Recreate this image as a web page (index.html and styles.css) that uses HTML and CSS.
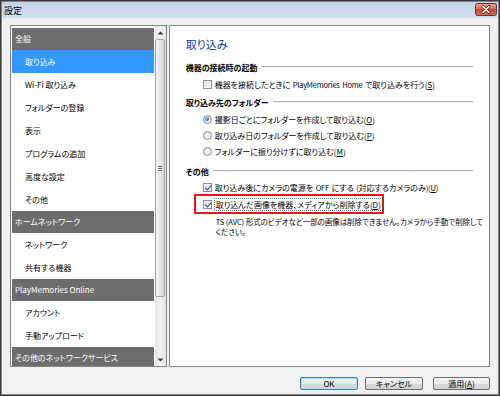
FILE: index.html
```html
<!DOCTYPE html>
<html lang="ja">
<head>
<meta charset="utf-8">
<title>設定</title>
<link rel="stylesheet" href="styles.css">
</head>
<body>
<div class="window">
  <div class="titlebar">
    <span class="title">設定</span>
    <span class="close">
      <svg width="22" height="13" viewBox="0 0 22 13">
        <defs>
          <linearGradient id="cg" x1="0" y1="0" x2="0" y2="1">
            <stop offset="0" stop-color="#e8a595"/>
            <stop offset="0.45" stop-color="#d2705c"/>
            <stop offset="0.5" stop-color="#c24a36"/>
            <stop offset="1" stop-color="#d0765a"/>
          </linearGradient>
        </defs>
        <rect x="0.5" y="0.5" width="21" height="12" rx="2" fill="url(#cg)" stroke="#7a3328"/>
        <path d="M8 3.5 L14 9.5 M14 3.5 L8 9.5" stroke="#5a2018" stroke-width="3" stroke-linecap="round"/>
        <path d="M8 3.5 L14 9.5 M14 3.5 L8 9.5" stroke="#ffffff" stroke-width="1.6" stroke-linecap="round"/>
      </svg>
    </span>
  </div>
  <div class="body">
    <div class="panes">
      <div class="nav">
        <div class="nav-list">
          <div class="hdr">全般</div>
          <div class="item sel">取り込み</div>
          <div class="item">Wi-Fi 取り込み</div>
          <div class="item">フォルダーの登録</div>
          <div class="item">表示</div>
          <div class="item">プログラムの追加</div>
          <div class="item">高度な設定</div>
          <div class="item">その他</div>
          <div class="hdr">ホームネットワーク</div>
          <div class="item">ネットワーク</div>
          <div class="item">共有する機器</div>
          <div class="hdr">PlayMemories Online</div>
          <div class="item">アカウント</div>
          <div class="item">手動アップロード</div>
          <div class="hdr">その他のネットワークサービス</div>
        </div>
        <div class="scrollbar">
          <div class="arrow">
            <svg width="7" height="4" viewBox="0 0 7 4"><path d="M0.5 3.5 L3.5 0.5 L6.5 3.5 Z" fill="#3c3c3c"/></svg>
          </div>
          <div class="thumb"><span class="grip"></span></div>
          <div class="track-rest"></div>
          <div class="arrow">
            <svg width="7" height="4" viewBox="0 0 7 4"><path d="M0.5 0.5 L3.5 3.5 L6.5 0.5 Z" fill="#3c3c3c"/></svg>
          </div>
        </div>
      </div>
      <div class="content">
        <div class="page-title">取り込み</div>

        <div class="group first">
          <span class="group-label">機器の接続時の起動</span><span class="rule"></span>
        </div>
        <div class="row tight">
          <span class="cb"></span><span class="label">機器を接続したときに<span class="lat"> PlayMemories Home </span>で取り込みを行う(<u>S</u>)</span>
        </div>

        <div class="group second">
          <span class="group-label">取り込み先のフォルダー</span><span class="rule"></span>
        </div>
        <div class="row tight">
          <span class="radio on"></span><span class="label">撮影日ごとにフォルダーを作成して取り込む(<u>O</u>)</span>
        </div>
        <div class="row">
          <span class="radio"></span><span class="label">取り込み日のフォルダーを作成して取り込む(<u>P</u>)</span>
        </div>
        <div class="row">
          <span class="radio"></span><span class="label">フォルダーに振り分けずに取り込む(<u>M</u>)</span>
        </div>

        <div class="group third">
          <span class="group-label">その他</span><span class="rule"></span>
        </div>
        <div class="row">
          <span class="cb on"></span><span class="label">取り込み後にカメラの電源を<span class="lat"> OFF </span>にする<span class="lat"> (</span>対応するカメラのみ<span class="lat">)(<u>U</u>)</span></span>
        </div>
        <div class="row highlight">
          <span class="cb on"></span><span class="label focus">取り込んだ画像を機器、メディアから削除する(<u>D</u>)</span>
        </div>
        <div class="note">TS (AVC) 形式のビデオなど一部の画像は削除できません。カメラから手動で削除して<br>ください。</div>
      </div>
    </div>
    <div class="buttons">
      <span class="btn default">OK</span>
      <span class="btn">キャンセル</span>
      <span class="btn apply">適用(<u>A</u>)</span>
    </div>
  </div>
</div>
</body>
</html>
```

FILE: styles.css
```css
* { box-sizing: border-box; }

html, body {
  margin: 0;
  padding: 0;
  background: #ffffff;
}

body {
  font-family: "Noto Sans CJK JP", "Noto Sans", sans-serif;
  font-size: 8px;
  font-feature-settings: "palt";
  color: #000;
  width: 500px;
  height: 397px;
  overflow: hidden;
}

u { text-decoration: underline; text-underline-offset: 1px; }

.window {
  width: 500px;
  height: 396px;
  border: 1px solid #3a3a3a;
  box-shadow: inset 0 0 0 1px #7d8590;
  background: #f0f0f0;
  display: flex;
  flex-direction: column;
}

.titlebar {
  height: 16px;
  margin: 1px 1px 0 1px;
  background: linear-gradient(to bottom, #c3d3e6 0%, #cedbeb 60%, #d6e1ee 100%);
  display: flex;
  align-items: center;
  justify-content: space-between;
  padding: 0 1px 0 2px;
}

.title {
  font-size: 9px;
  line-height: 12px;
  color: #000;
  padding-top: 1px;
}

.close {
  display: flex;
  width: 22px;
  height: 13px;
  margin-top: -1px;
}

.body {
  flex: 1;
  padding: 7px 8px 0 8px;
  margin: 0 1px 1px 1px;
  display: flex;
  flex-direction: column;
}

.panes {
  display: flex;
  gap: 1px;
}

/* ---------- navigation list ---------- */
.nav {
  width: 157px;
  height: 342px;
  border: 1px solid #828790;
  background: #fff;
  display: flex;
  overflow: hidden;
}

.nav-list {
  width: 144px;
  padding: 2px 1px 0 1px;
  overflow: hidden;
}

.hdr {
  height: 22px;
  line-height: 22px;
  background: #6d6d6d;
  color: #fff;
  padding-left: 3px;
  white-space: nowrap;
}

.item {
  height: 23px;
  line-height: 23px;
  padding-left: 13px;
  white-space: nowrap;
}

.item.sel {
  background: #3399ff;
  color: #fff;
}

.scrollbar {
  width: 11px;
  background: linear-gradient(to right, #e6e6e6, #f2f2f2 50%, #e6e6e6);
  display: flex;
  flex-direction: column;
  align-items: center;
}

.arrow {
  height: 13px;
  width: 11px;
  display: flex;
  align-items: center;
  justify-content: center;
}

.thumb {
  width: 10px;
  height: 258px;
  border: 1px solid #a6a6a6;
  border-radius: 2px;
  background: linear-gradient(to right, #f4f4f4, #e4e4e4 50%, #d6d6d6);
  display: flex;
  align-items: center;
  justify-content: center;
}

.grip {
  width: 4px;
  height: 5px;
  background: repeating-linear-gradient(to bottom, #6f6f6f 0 1px, transparent 1px 2px);
}

.track-rest { flex: 1; }

/* ---------- content ---------- */
.content {
  width: 322px;
  height: 342px;
  border: 1px solid #828790;
  background: #fff;
  padding: 11px 16px 0 16px;
  margin-left: 1px;
}

.page-title {
  font-size: 11px;
  line-height: 14px;
  color: #0e3c9b;
}

.group {
  display: flex;
  align-items: center;
  gap: 4px;
  height: 16px;
  font-weight: bold;
}

.group.first { margin-top: 8px; }
.group.second { margin-top: 2px; }
.group.third { margin-top: 4px; }

.group-label { white-space: nowrap; }

.rule {
  flex: 1;
  height: 2px;
  border-top: 1px solid #b2b2b2;
  border-bottom: 1px solid #f4f4f4;
}

.row {
  display: flex;
  align-items: center;
  gap: 3px;
  height: 16px;
  padding-left: 17px;
  white-space: nowrap;
}

.row.tight { margin-top: 1px; }

.lat {
  font-size: 7.5px;
  letter-spacing: -0.2px;
  word-spacing: 1px;
}

.row.highlight {
  margin-top: 1px;
  margin-left: 10px;
  padding-left: 7px;
  width: 186px;
  outline: 2px solid #e8141c;
}

.label.focus {
  outline: 1px dotted #777;
  outline-offset: 0;
  padding: 0 1px;
}

.cb {
  width: 9px;
  height: 9px;
  border: 1px solid #8e8f8f;
  background: linear-gradient(135deg, #dcdcdc, #f6f6f6);
  box-shadow: inset 0 0 0 1px #f4f4f4;
  position: relative;
  flex: none;
}

.cb.on::after {
  content: "";
  position: absolute;
  left: 2px;
  top: 0px;
  width: 3px;
  height: 5px;
  border-right: 1.6px solid #27449a;
  border-bottom: 1.6px solid #27449a;
  transform: rotate(40deg);
}

.radio {
  width: 9px;
  height: 9px;
  border-radius: 50%;
  border: 1px solid #8e8f8f;
  background: radial-gradient(circle at 60% 60%, #f6f6f6, #d9d9d9);
  position: relative;
  flex: none;
}

.radio.on::after {
  content: "";
  position: absolute;
  left: 1.5px;
  top: 1.5px;
  width: 4px;
  height: 4px;
  border-radius: 50%;
  background: radial-gradient(circle at 35% 35%, #8fc6ff, #1d5fbf 70%);
}

.note {
  margin-top: 5px;
  margin-right: -15px;
  padding-left: 30px;
  font-size: 7.5px;
  letter-spacing: -0.05px;
  line-height: 10px;
  white-space: nowrap;
}

/* ---------- buttons ---------- */
.buttons {
  display: flex;
  justify-content: flex-end;
  margin-top: 10px;
}

.btn {
  width: 58px;
  height: 13px;
  border: 1px solid #707070;
  border-radius: 2px;
  background: linear-gradient(to bottom, #f2f2f2 0%, #ebebeb 50%, #dddddd 51%, #cfcfcf 100%);
  display: flex;
  align-items: center;
  justify-content: center;
  line-height: 11px;
  margin-left: 7px;
}

.btn.default {
  border-color: #3c7fb1;
  box-shadow: inset 0 0 0 1px #a6dff6;
}

.btn.apply { margin-left: 10px; width: 57px; }
```
